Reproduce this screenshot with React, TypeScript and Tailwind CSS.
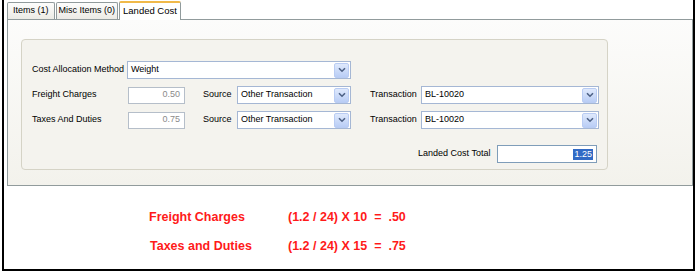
import React from "react";

const ui = { fontFamily: '"Liberation Sans", Arial, sans-serif' };

function Arrow() {
  return (
    <div className="w-[15px] h-[15px] mr-[1px] shrink-0 rounded-[2px] border border-[#b9ccf3] bg-gradient-to-b from-[#dfe9fc] to-[#b9cdf5] flex items-center justify-center">
      <svg width="8" height="6" viewBox="0 0 8 6">
        <path d="M1 1.2 L4 4.2 L7 1.2" fill="none" stroke="#4d6185" strokeWidth="1.6" />
      </svg>
    </div>
  );
}

function Select({ value, w }: { value: string; w: string }) {
  return (
    <div className={`${w} h-[18px] bg-white border border-[#a5b7d4] flex items-center justify-between shrink-0`}>
      <span className="pl-[3px] text-[9px] text-black">{value}</span>
      <Arrow />
    </div>
  );
}

function NumInput({ value }: { value: string }) {
  return (
    <div className="w-[57px] h-[17px] bg-white border border-[#b5bec9] flex items-center justify-end pr-[4px] text-[9px] text-[#8a8a8a] shrink-0">
      {value}
    </div>
  );
}

function Row({ label, value }: { label: string; value: string }) {
  return (
    <div className="flex items-center h-[18px]">
      <div className="w-[96px] text-[9px]">{label}</div>
      <NumInput value={value} />
      <div className="w-[18px]" />
      <div className="w-[34px] text-[9px]">Source</div>
      <Select value="Other Transaction" w="w-[114px]" />
      <div className="w-[19px]" />
      <div className="w-[51px] text-[9px]">Transaction</div>
      <Select value="BL-10020" w="w-[178px]" />
    </div>
  );
}

export default function App() {
  return (
    <div className="w-[698px] h-[275px] bg-white relative" style={ui}>
      <div className="ml-[2px] w-[693px] h-[271px] border-l-2 border-r-2 border-b-2 border-black flex flex-col">
        {/* tabs */}
        <div className="flex items-end h-[19px] pl-[3px] text-[9px] text-black whitespace-nowrap">
          <div className="h-[17px] px-[5px] mr-[1px] border border-b-0 border-[#919b9c] rounded-t-[2px] bg-gradient-to-b from-[#fdfdfc] to-[#ecebe5] flex items-center">
            Items (1)
          </div>
          <div className="h-[17px] px-[2px] mr-[1px] border border-b-0 border-[#919b9c] rounded-t-[2px] bg-gradient-to-b from-[#fdfdfc] to-[#ecebe5] flex items-center">
            Misc Items (0)
          </div>
          <div className="h-[19px] px-[3px] border border-b-0 border-[#919b9c] border-t-2 border-t-[#f0b94a] rounded-t-[2px] bg-white flex items-center -mb-[1px] relative z-10 text-[9.5px]">
            Landed Cost
          </div>
        </div>
        {/* panel */}
        <div className="ml-[3px] mr-0 h-[167px] border border-[#919b9c] bg-gradient-to-b from-[#fcfcfb] to-[#f3f2ec] pl-[13px] pt-[19px] pr-[84px] pb-[15px]">
          <div className="h-full rounded-[4px] border border-[#d5d3c6] bg-[#f4f3ee] pl-[10px] pt-[21px]">
            <div className="flex items-center h-[18px]">
              <div className="w-[95px] text-[9px]">Cost Allocation Method</div>
              <Select value="Weight" w="w-[224px]" />
            </div>
            <div className="h-[7px]" />
            <Row label="Freight Charges" value="0.50" />
            <div className="h-[7px]" />
            <Row label="Taxes And Duties" value="0.75" />
            <div className="flex items-center h-[18px] mt-[16px] pl-[386px]">
              <div className="w-[79px] text-[9px]">Landed Cost Total</div>
              <div className="w-[100px] h-[18px] bg-white border border-[#7f9db9] flex items-center justify-end pr-[3px]">
                <span className="bg-[#316ac5] text-white text-[9px] px-[1px] leading-[11px]">1.25</span>
              </div>
            </div>
          </div>
        </div>
        {/* formulas */}
        <div className="pl-[145px] pt-[24px] text-[12.5px] font-bold text-[#ff1a1a]" style={{ fontFamily: '"Liberation Sans", Arial, sans-serif' }}>
          <div className="flex h-[15px] items-center">
            <div className="w-[139px]">Freight Charges</div>
            <div className="whitespace-pre">(1.2 / 24) X 10 &nbsp;= &nbsp;.50</div>
          </div>
          <div className="flex h-[15px] items-center mt-[14px]">
            <div className="w-[139px] pl-[1px]">Taxes and Duties</div>
            <div className="whitespace-pre">(1.2 / 24) X 15 &nbsp;= &nbsp;.75</div>
          </div>
        </div>
      </div>
    </div>
  );
}
